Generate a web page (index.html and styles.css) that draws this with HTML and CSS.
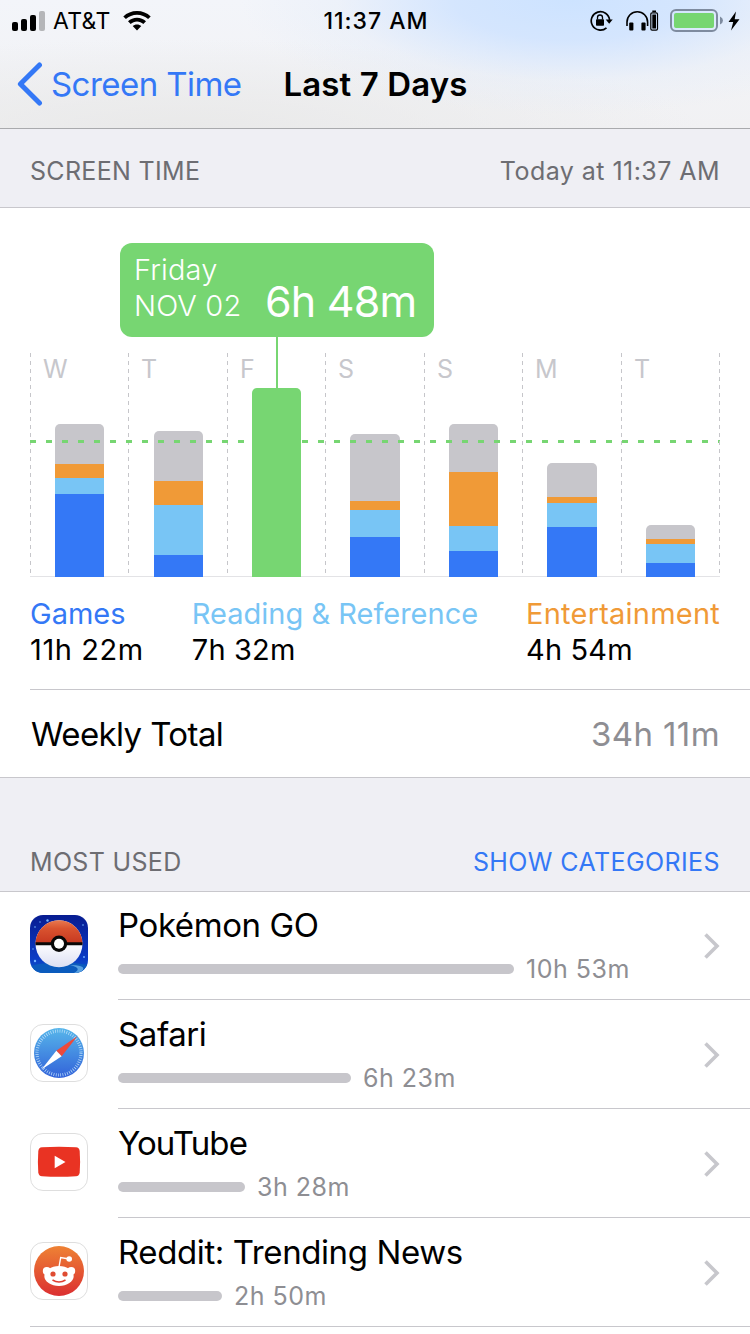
FILE: index.html
```html
<!DOCTYPE html>
<html lang="en">
<head>
<meta charset="utf-8">
<title>Screen Time</title>
<link rel="stylesheet" href="styles.css">
</head>
<body>
<main class="screen">
  <header class="top">
    <div class="status">
      <div class="status-left">
        <svg class="signal" width="34" height="20" viewBox="0 0 34 20"><rect x="0" y="11" width="6" height="9" rx="2"/><rect x="9" y="8" width="6" height="12" rx="2"/><rect x="18" y="4" width="6" height="16" rx="2"/><rect x="27" y="0" width="6" height="20" rx="2" fill="#b5b6b9"/></svg>
        <span class="carrier">AT&amp;T</span>
        <svg class="wifi" width="28" height="20" viewBox="0 0 28 20"><path d="M14 0C8.700 0 3.900 2 0.300 5.400L2.900 8.100C5.900 5.300 9.800 3.700 14 3.700s8.100 1.600 11.100 4.400l2.600-2.700C24.100 2 19.300 0 14 0z"/><path d="M14 6.800c-3.400 0-6.600 1.300-9 3.500l2.700 2.700c1.700-1.600 3.900-2.500 6.300-2.500s4.600.9 6.300 2.500l2.700-2.700c-2.400-2.200-5.600-3.500-9-3.500z"/><path d="M14 13.400c-1.700 0-3.200.6-4.300 1.600L14 19.600l4.300-4.600c-1.100-1-2.600-1.600-4.300-1.600z"/></svg>
      </div>
      <span class="clock">11:37 AM</span>
      <div class="status-right">
        <svg class="lock" width="24" height="22" viewBox="0 0 24 22"><path d="M16.500 17.800A9.200 9.200 0 1 1 19.600 10" fill="none" stroke="#000" stroke-width="1.700"/><path d="M15.700 9.600h7l-3.500 4.200z"/><rect x="6" y="9.200" width="8" height="6.500" rx=".8"/><path d="M7.500 9.500V7.500a2.500 2.500 0 0 1 5 0v2" fill="none" stroke="#000" stroke-width="1.300"/></svg>
        <svg class="phones" width="33" height="22" viewBox="0 0 33 22"><path d="M1 16V12a10.300 10.300 0 0 1 20.600 0v4" fill="none" stroke="#000" stroke-width="1.600"/><rect x="3.200" y="12.500" width="4.200" height="8" rx="1"/><rect x="15.400" y="12.500" width="4.200" height="8" rx="1"/><rect x="24.800" y="2.800" width="6.700" height="17.300" rx="1.300" fill="none" stroke="#000" stroke-width="1.200"/><rect x="26.300" y="4.500" width="3.700" height="14"/><rect x="26.300" y=".5" width="3.700" height="1.500"/></svg>
        <svg class="battery" width="54" height="23" viewBox="0 0 54 23"><rect x="1" y="1" width="46" height="21" rx="5" fill="none" stroke="#7e8b9f" stroke-width="2"/><rect x="4" y="4" width="40" height="15" rx="2" fill="#77d671"/><path d="M50 7.500q3 1.500 3 4t-3 4z" fill="#7e8b9f"/></svg>
        <svg class="bolt" width="12" height="20" viewBox="0 0 12 20"><path d="M8 0.500L.5 11h4.700L3 19.500 11.500 8.300H6.700z"/></svg>
      </div>
    </div>
    <nav class="nav">
      <svg class="back" width="26" height="44" viewBox="0 0 26 44"><path d="M22.500 3L3.400 22l19.100 19" fill="none" stroke="#3478f6" stroke-width="5" stroke-linecap="round" stroke-linejoin="round"/></svg>
      <span class="back-label">Screen Time</span>
      <h1 class="title">Last 7 Days</h1>
    </nav>
  </header>

  <div class="section-head head-time"><span class="sh-time">SCREEN TIME</span><span class="sh-today">Today at 11:37 AM</span></div>

  <section class="panel">
    <div class="chart">
      <div class="callout">
        <div class="when"><span class="day-name">Friday</span><span class="date">NOV 02</span></div>
        <span class="amount">6h 48m</span>
      </div>
      <svg class="average" width="690" height="3" viewBox="0 0 690 3"><path d="M0 1.500H690" stroke="#77d672" stroke-width="3" stroke-dasharray="6 10"/></svg>
      <div class="day"><span class="letter">W</span><div class="bar"><i class="other" style="height:40px"></i><i class="fun" style="height:14px"></i><i class="read" style="height:16px"></i><i class="games" style="height:83px"></i></div></div>
      <div class="day"><span class="letter">T</span><div class="bar nudge"><i class="other" style="height:50px"></i><i class="fun" style="height:24px"></i><i class="read" style="height:50px"></i><i class="games" style="height:22px"></i></div></div>
      <div class="day picked"><span class="letter">F</span><div class="bar"><i class="total" style="height:189px"></i></div></div>
      <div class="day"><span class="letter">S</span><div class="bar wide"><i class="other" style="height:67px"></i><i class="fun" style="height:9px"></i><i class="read" style="height:27px"></i><i class="games" style="height:40px"></i></div></div>
      <div class="day"><span class="letter">S</span><div class="bar"><i class="other" style="height:48px"></i><i class="fun" style="height:54px"></i><i class="read" style="height:25px"></i><i class="games" style="height:26px"></i></div></div>
      <div class="day"><span class="letter">M</span><div class="bar wide"><i class="other" style="height:34px"></i><i class="fun" style="height:6px"></i><i class="read" style="height:24px"></i><i class="games" style="height:50px"></i></div></div>
      <div class="day"><span class="letter">T</span><div class="bar"><i class="other" style="height:14px"></i><i class="fun" style="height:5px"></i><i class="read" style="height:19px"></i><i class="games" style="height:14px"></i></div></div>
    </div>
    <div class="legend">
      <div class="key"><span class="k-games">Games</span><span class="v-games">11h 22m</span></div>
      <div class="key"><span class="k-read">Reading &amp; Reference</span><span class="v-read">7h 32m</span></div>
      <div class="key"><span class="k-fun">Entertainment</span><span class="v-fun">4h 54m</span></div>
    </div>
    <div class="total-row"><span class="total-label">Weekly Total</span><span class="total-value">34h 11m</span></div>
  </section>

  <div class="section-head head-used"><span class="sh-used">MOST USED</span><a class="show">SHOW CATEGORIES</a></div>

  <ul class="apps">
    <li class="app">
      <svg class="icon" width="58" height="58" viewBox="0 0 58 58">
        <defs><clipPath id="sq"><rect width="58" height="58" rx="13"/></clipPath>
        <linearGradient id="sky" x2="0" y2="1"><stop stop-color="#071c91"/><stop offset=".75" stop-color="#0b3bc5"/><stop offset="1" stop-color="#0b56c8"/></linearGradient>
        <linearGradient id="red" x2="0" y2="1"><stop stop-color="#e8794f"/><stop offset=".35" stop-color="#d9532f"/><stop offset="1" stop-color="#c63720"/></linearGradient>
        <linearGradient id="white" x2="0" y2="1"><stop offset=".6" stop-color="#f6f7fd"/><stop offset="1" stop-color="#dcdff2"/></linearGradient></defs>
        <g clip-path="url(#sq)"><rect width="58" height="58" fill="url(#sky)"/><path d="M0 51Q28 44 58 50V58H0z" fill="#0b5bbd"/><path d="M40 50Q60 50 50 58H44Q53 53 40 50z" fill="#58a0e0"/><g fill="#74b6ff"><circle cx="17.500" cy="5.500" r="1.200"/><circle cx="5" cy="12" r=".8"/><circle cx="53" cy="10" r=".8"/><circle cx="5" cy="46" r="1.200"/><circle cx="54" cy="42" r=".9"/><circle cx="10" cy="7" r=".7"/><circle cx="3" cy="34" r=".7"/></g>
        <circle cx="29" cy="28.800" r="23.500" fill="url(#white)"/><path d="M5.500 28.800a23.500 23.500 0 0 1 47 0z" fill="url(#red)"/><path d="M5.500 28.800h47" stroke="#080808" stroke-width="3"/><circle cx="29" cy="28.800" r="8.200" fill="#080808"/><circle cx="29" cy="28.800" r="5" fill="#fff"/></g>
      </svg>
      <div class="info"><div class="detail"><span class="name n-pokemon">Pokémon GO</span><div class="usage"><i class="meter" style="width:396px"></i><span class="t-pokemon">10h 53m</span></div></div><svg class="chev" width="17" height="28" viewBox="0 0 17 28"><path d="M2.500 2.500L14 14 2.500 25.500"/></svg></div>
    </li>
    <li class="app">
      <svg class="icon" width="58" height="58" viewBox="0 0 58 58">
        <defs><linearGradient id="sea" x2="0" y2="1"><stop stop-color="#57b6ea"/><stop offset="1" stop-color="#3262d9"/></linearGradient></defs>
        <rect x=".5" y=".5" width="57" height="57" rx="12.500" fill="#fff" stroke="#dedede"/><circle cx="29" cy="29" r="25" fill="url(#sea)"/><circle cx="29" cy="29" r="22" fill="none" stroke="#bfe0fa" stroke-width="3.200" stroke-dasharray=".7 1.604"/><path d="M47.500 12L31.700 32.300 26.300 26.700z" fill="#ed493b"/><path d="M11.500 45.500L26.300 26.700l5.400 5.600z" fill="#fff"/>
      </svg>
      <div class="info"><div class="detail"><span class="name n-safari">Safari</span><div class="usage"><i class="meter" style="width:233px"></i><span class="t-safari">6h 23m</span></div></div><svg class="chev" width="17" height="28" viewBox="0 0 17 28"><path d="M2.500 2.500L14 14 2.500 25.500"/></svg></div>
    </li>
    <li class="app">
      <svg class="icon" width="58" height="58" viewBox="0 0 58 58">
        <rect x=".5" y=".5" width="57" height="57" rx="12.500" fill="#fff" stroke="#dedede"/><path d="M12 14.300Q29 13.300 46 14.300 49.300 14.500 49.700 18 50.500 29 49.700 39.500 49.300 43 46 43.300 29 44.300 12 43.300 8.700 43 8.300 39.500 7.500 29 8.300 18 8.700 14.500 12 14.300z" fill="#e93323"/><path d="M24.700 22.800v12.400L35.500 29z" fill="#fff"/>
      </svg>
      <div class="info"><div class="detail"><span class="name n-youtube">YouTube</span><div class="usage"><i class="meter" style="width:127px"></i><span class="t-youtube">3h 28m</span></div></div><svg class="chev" width="17" height="28" viewBox="0 0 17 28"><path d="M2.500 2.500L14 14 2.500 25.500"/></svg></div>
    </li>
    <li class="app">
      <svg class="icon" width="58" height="58" viewBox="0 0 58 58">
        <defs><linearGradient id="fire" x2="0" y2="1"><stop stop-color="#ee8234"/><stop offset="1" stop-color="#db2f31"/></linearGradient></defs>
        <rect x=".5" y=".5" width="57" height="57" rx="12.500" fill="#fff" stroke="#dedede"/><circle cx="29" cy="29" r="25" fill="url(#fire)"/><g fill="#fff"><circle cx="16.800" cy="29" r="4"/><circle cx="41.200" cy="29" r="4"/><ellipse cx="29" cy="34" rx="14.700" ry="10"/><circle cx="39.200" cy="17" r="2.800"/></g><path d="M29 25l1.700-9.500 7 1.300" fill="none" stroke="#fff" stroke-width="1.400"/><circle cx="23" cy="32" r="2.600" fill="#df4b31"/><circle cx="35" cy="32" r="2.600" fill="#df4b31"/><path d="M22.500 38q6.500 4 13 0" fill="none" stroke="#df3f31" stroke-width="1.500"/>
      </svg>
      <div class="info"><div class="detail"><span class="name n-reddit">Reddit: Trending News</span><div class="usage"><i class="meter" style="width:104px"></i><span class="t-reddit">2h 50m</span></div></div><svg class="chev" width="17" height="28" viewBox="0 0 17 28"><path d="M2.500 2.500L14 14 2.500 25.500"/></svg></div>
    </li>
  </ul>
</main>
</body>
</html>
```
FILE: styles.css
```css
* { box-sizing: border-box; }
body { margin: 0; font-family: Inter, "Liberation Sans", sans-serif; color: #000; background: #fff; }
span, a, h1 { white-space: nowrap; }
i { display: block; }
svg { display: block; flex: none; }
.screen { width: 750px; height: 1334px; overflow: hidden; }

.top {
  height: 129px; border-bottom: 1px solid #a9aaad;
  background:
    radial-gradient(ellipse 330px 115px at 570px 0, #cde3ff 0, rgba(207,227,255,.85) 35%, rgba(225,235,250,.35) 70%, rgba(235,240,250,0) 100%),
    radial-gradient(ellipse 520px 90px at 180px 129px, #e9e9e9 0, rgba(236,236,236,0) 100%),
    linear-gradient(#f3f5fa, #f1f1f3);
}
.status { height: 40px; display: grid; grid-template-columns: 1fr auto 1fr; align-items: center; padding: 1px 10px 0 12px; }
.status-left, .status-right { display: flex; align-items: center; }
.status-right { justify-content: flex-end; }
.carrier { font-size: 23px; margin-left: 7px; letter-spacing: .3px; }
.wifi { margin-left: 12px; }
.clock { font-size: 23px; font-weight: 500; letter-spacing: 1px; }
.phones { margin-left: 12px; }
.battery { margin-left: 11px; }
.bolt { margin-left: 4px; }
.nav { height: 88px; display: flex; align-items: center; padding-left: 17px; }
.back-label { margin-left: 8px; color: #3478f6; font-size: 33px; letter-spacing: -.55px; }
.title { margin: 0 0 0 42px; font-size: 33px; font-weight: 600; letter-spacing: .1px; }

.section-head { background: #efeff4; border-bottom: 1px solid #c8c7cc; display: flex; justify-content: space-between; color: #6d6d72; font-size: 25px; line-height: 30px; padding: 0 30px; }
.head-time { height: 79px; padding-top: 27px; }
.head-used { height: 114px; padding-top: 69px; }
.sh-time, .sh-used { letter-spacing: .32px; }
.sh-today { letter-spacing: .45px; }
.show { color: #3478f6; letter-spacing: .4px; }

.panel { height: 570px; border-bottom: 1px solid #c8c7cc; padding: 145px 0 0 30px; }
.chart { position: relative; width: 690px; height: 224px; display: grid; grid-template-columns: 98px 99px 98px 99px 98px 99px 99px; border-bottom: 1px solid #e3e3e6; }
.chart::after { content: ""; position: absolute; right: 0; top: 0; width: 1px; height: 220px; background: repeating-linear-gradient(#c6c6ca 0 4px, transparent 4px 8px); }
.day { height: 224px; display: flex; flex-direction: column; background: repeating-linear-gradient(#c6c6ca 0 4px, transparent 4px 8px) 0 0 / 1px 220px no-repeat; }
.letter { font-size: 25px; line-height: 30px; color: #c7c7cc; padding: 1px 0 0 13px; }
.bar { width: 49px; margin: auto 0 0 25px; border-radius: 5px 5px 0 0; overflow: hidden; }
.nudge { margin-left: 26px; }
.wide { width: 50px; }
.other { background: #c7c6cb; }
.fun { background: #f09a37; }
.read { background: #78c5f5; }
.games { background: #3478f6; }
.total { background: #77d672; }
.picked .bar { position: relative; }
.average { position: absolute; left: 0; top: 87px; }
.callout { position: absolute; left: 90px; top: -110px; width: 314px; height: 94px; border-radius: 12px; background: #77d672; color: #fff; display: flex; padding: 9px 0 0 14px; }
.callout::after { content: ""; position: absolute; left: 156px; top: 94px; width: 2px; height: 52px; background: #77d672; }
.when { width: 131px; display: flex; flex-direction: column; font-size: 29px; line-height: 36px; font-weight: 300; letter-spacing: .15px; }
.amount { font-size: 43px; line-height: 52px; padding-top: 23px; letter-spacing: -.8px; }

.legend { display: flex; justify-content: space-between; width: 690px; padding-top: 19px; height: 112px; font-size: 29px; line-height: 36px; }
.key { display: flex; flex-direction: column; }
.k-games { color: #3478f6; }
.k-read { color: #78c5f5; }
.k-fun { color: #f09a37; letter-spacing: .22px; }
.v-games { letter-spacing: .6px; }
.v-read, .v-fun { letter-spacing: .15px; }
.total-row { height: 88px; border-top: 1px solid #c8c7cc; display: flex; justify-content: space-between; align-items: center; padding: 1px 30px 0 1px; font-size: 33px; }
.total-label { letter-spacing: -.6px; }
.total-value { color: #8e8e93; letter-spacing: .4px; }

.apps { list-style: none; margin: 0; padding: 0 0 0 30px; }
.app { height: 109px; display: flex; }
.icon { margin: 23px 30px 0 0; }
.info { flex: 1; height: 108px; border-bottom: 1px solid #c8c7cc; display: flex; justify-content: space-between; padding-right: 30px; }
.app:last-child { height: 108px; border-bottom: 1px solid #c8c7cc; }
.app:last-child .info { border: 0; }
.detail { display: flex; flex-direction: column; }
.name { font-size: 33px; line-height: 40px; padding-top: 13px; letter-spacing: -.4px; }
.n-youtube { letter-spacing: -.9px; }
.usage { display: flex; align-items: center; gap: 12px; height: 32px; margin-top: 8px; color: #8e8e93; font-size: 25px; letter-spacing: .5px; }
.meter { height: 10px; border-radius: 5px; background: #c7c6cb; }
.chev { margin-top: 40px; }
.chev path { fill: none; stroke: #c7c7cc; stroke-width: 3.6; }
```
